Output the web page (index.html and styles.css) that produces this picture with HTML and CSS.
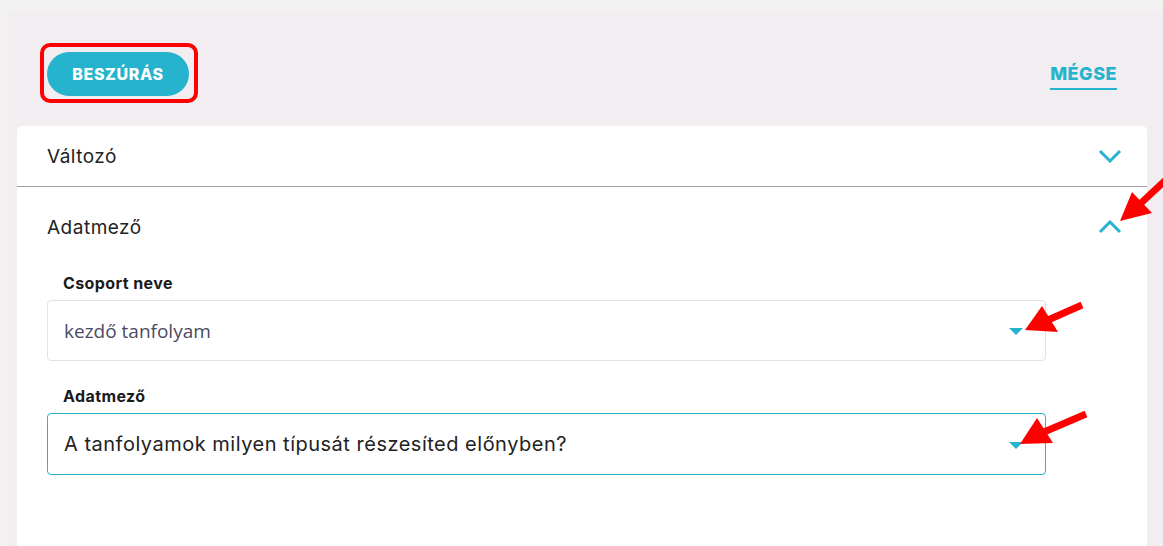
FILE: index.html
```html
<!DOCTYPE html>
<html lang="hu">
<head>
    <meta charset="UTF-8">
    <meta name="viewport" content="width=device-width, initial-scale=1.0">
    <title>Beszúrás</title>
    <link rel="stylesheet" href="styles.css">
</head>
<body>
    <div class="panel">
        <div class="toolbar">
            <div class="btn-wrap">
                <button class="insert">BESZÚRÁS</button>
                <span class="highlight"></span>
            </div>
            <a href="#" class="cancel">MÉGSE</a>
        </div>

        <div class="card">
            <div class="section">
                <div class="section-head">
                    <span>Változó</span>
                    <svg class="chevron" width="24" height="14" viewBox="0 0 24 14"><polyline points="2,2 12,12 22,2" /></svg>
                </div>
            </div>

            <div class="section open">
                <div class="section-head">
                    <span>Adatmező</span>
                    <svg class="chevron" width="24" height="14" viewBox="0 0 24 14"><polyline points="2,12 12,2 22,12" /></svg>
                </div>

                <div class="fields">
                    <label class="field-label">Csoport neve</label>
                    <div class="select">
                        <span class="value muted">kezdő tanfolyam</span>
                        <span class="caret"></span>
                    </div>

                    <label class="field-label">Adatmező</label>
                    <div class="select active">
                        <span class="value">A tanfolyamok milyen típusát részesíted előnyben?</span>
                        <span class="caret"></span>
                    </div>
                </div>
            </div>
        </div>
    </div>

    <!-- annotation arrows -->
    <svg class="arrows" width="1163" height="546" viewBox="0 0 1163 546">
        <line x1="1170" y1="176" x2="1140" y2="204" />
        <polygon points="1120,221 1132,192 1152,213" />
        <line x1="1082" y1="305" x2="1048" y2="320" />
        <polygon points="1025,330 1042,306 1058,332" />
        <line x1="1086" y1="414" x2="1044" y2="432" />
        <polygon points="1020,444 1037,418 1053,443" />
    </svg>
</body>
</html>
```

FILE: styles.css
```css
body {
    margin: 0;
    padding: 0;
    background-color: #f2f2f2;
    font-family: Inter, "Noto Sans", sans-serif;
    color: #222;
    height: 546px;
    overflow: hidden;
}

.panel {
    margin: 12px 0 0 7px;
    padding: 0 16px 0 10px;
    background-color: #f1edf0;
    height: 534px;
    box-sizing: border-box;
}

.toolbar {
    display: flex;
    align-items: center;
    justify-content: space-between;
    padding: 40px 30px 30px 30px;
}

.btn-wrap {
    position: relative;
    display: flex;
}

.insert {
    width: 142px;
    height: 44px;
    border: none;
    border-radius: 22px;
    background-color: #26b3cd;
    color: #fff;
    font-family: Inter, sans-serif;
    font-weight: 800;
    font-size: 16px;
    letter-spacing: 0.6px;
    cursor: pointer;
}

.highlight {
    position: absolute;
    left: -7px;
    top: -9px;
    width: 150px;
    height: 52px;
    border: 4px solid #ff0000;
    border-radius: 10px;
}

.cancel {
    color: #26b3cd;
    font-weight: 800;
    font-size: 18px;
    letter-spacing: 0.5px;
    text-decoration: none;
    border-bottom: 2px solid #26b3cd;
    padding-bottom: 4px;
    margin-top: 4px;
}

.card {
    background: #fff;
    border-radius: 5px 5px 0 0;
    height: 420px;
}

.section {
    border-bottom: 1px solid #a99ba5;
}

.section.open {
    border-bottom: none;
    padding-top: 10px;
}

.section-head {
    display: flex;
    align-items: center;
    justify-content: space-between;
    height: 60px;
    padding: 0 25px 0 30px;
    font-size: 19px;
    letter-spacing: 0.5px;
    color: #222;
}

.chevron polyline {
    fill: none;
    stroke: #26b3cd;
    stroke-width: 3;
}

.fields {
    display: flex;
    flex-direction: column;
    padding: 16px 101px 0 30px;
}

.field-label {
    font-weight: 700;
    font-size: 16px;
    letter-spacing: 0.4px;
    line-height: 20px;
    padding-left: 16px;
    margin-bottom: 7px;
    color: #1a1a1a;
}

.select {
    display: flex;
    align-items: center;
    justify-content: space-between;
    height: 59px;
    border: 1px solid #e2e2e2;
    border-radius: 4px;
    padding: 0 22px 0 16px;
    margin-bottom: 25px;
}

.select.active {
    height: 60px;
    border-color: #26b3cd;
}

.value {
    font-size: 20px;
    letter-spacing: 0.5px;
    color: #222;
}

.value.muted {
    font-family: "Open Sans", sans-serif;
    font-size: 19px;
    letter-spacing: 0;
    color: #4b4a62;
}

.caret {
    width: 0;
    height: 0;
    border-left: 7px solid transparent;
    border-right: 7px solid transparent;
    border-top: 7px solid #26b3cd;
    margin-top: 2px;
}

.arrows {
    position: absolute;
    top: 0;
    left: 0;
    pointer-events: none;
}

.arrows line {
    stroke: #ff0000;
    stroke-width: 7;
}

.arrows polygon {
    fill: #ff0000;
}
```
